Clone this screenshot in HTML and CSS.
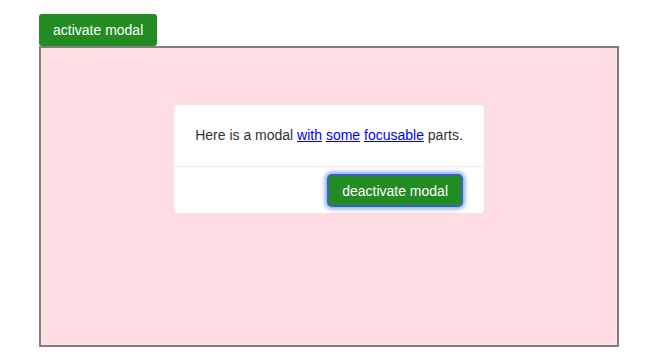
FILE: index.html
```html
<!DOCTYPE html>
<html lang="en">
<head>
  <meta charset="UTF-8" />
  <title>Focus trap demo</title>
  <link rel="stylesheet" href="styles.css">
</head>
<body>
  <div class="demo">
    <button class="btn" type="button">activate modal</button>
    <div class="trap-area">
      <div class="modal">
        <div class="modal-body">
          Here is a modal <a href="#">with</a> <a href="#">some</a> <a href="#">focusable</a> parts.
        </div>
        <div class="modal-footer">
          <button class="btn btn-focus" type="button">deactivate modal</button>
        </div>
      </div>
    </div>
  </div>
</body>
</html>
```

FILE: styles.css
```css
body {
  margin: 0;
  padding: 14px 39px;
  font-family: "Liberation Sans", Arial, sans-serif;
  font-size: 14px;
  color: #333;
  background: #fff;
}
.demo {
  width: 580px;
}
.btn {
  display: block;
  font-family: inherit;
  font-size: 14px;
  line-height: 18px;
  padding: 7px 14px;
  color: #fff;
  background: #228b22;
  border: 0;
  border-radius: 3px;
}
.trap-area {
  box-sizing: border-box;
  height: 301px;
  border: 2px solid #808080;
  background: #ffdde3;
  padding-top: 57px;
}
.modal {
  width: 310px;
  margin: 0 auto;
  background: #fff;
  border-radius: 4px;
}
.modal-body {
  padding: 20px;
  line-height: 21px;
  text-align: center;
  border-bottom: 1px solid #ececec;
}
.modal-body a {
  color: #0000ee;
}
.modal-footer {
  display: flex;
  justify-content: flex-end;
  padding: 9px 23px 8px;
}
.btn-focus {
  padding: 6px 13px 5px;
  margin: 0;
  box-shadow: 0 0 0 2px #3564c0, 0 0 4px 4px rgba(60, 105, 205, 0.6);
  border-radius: 3px;
}
```
